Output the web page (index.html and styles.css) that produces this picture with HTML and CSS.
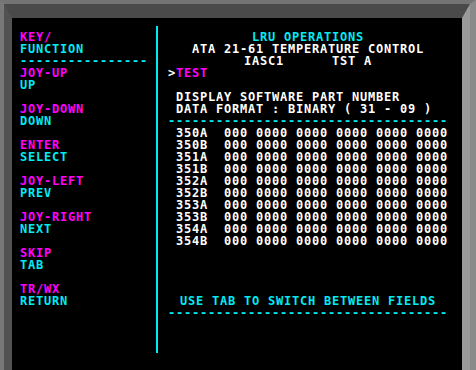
FILE: index.html
```html
<!DOCTYPE html>
<html>
<head>
<meta charset="utf-8">
<link rel="stylesheet" href="styles.css">
</head>
<body>
<div class="bezel">
  <div class="frame">
    <div class="keys">
      <div class="group head">
        <div class="k">KEY/</div>
        <div class="f">FUNCTION</div>
        <div class="f">----------------</div>
      </div>
      <div class="group"><div class="k">JOY-UP</div><div class="f">UP</div></div>
      <div class="group"><div class="k">JOY-DOWN</div><div class="f">DOWN</div></div>
      <div class="group"><div class="k">ENTER</div><div class="f">SELECT</div></div>
      <div class="group"><div class="k">JOY-LEFT</div><div class="f">PREV</div></div>
      <div class="group"><div class="k">JOY-RIGHT</div><div class="f">NEXT</div></div>
      <div class="group"><div class="k">SKIP</div><div class="f">TAB</div></div>
      <div class="group"><div class="k">TR/WX</div><div class="f">RETURN</div></div>
    </div>
    <div class="divider"></div>
    <div class="main">
      <div class="ln c center">LRU OPERATIONS</div>
      <div class="ln w center">ATA 21-61 TEMPERATURE CONTROL</div>
      <div class="ln w center">IASC1      TST A</div>
      <div class="ln w">&gt;<span class="m">TEST</span></div>
      <div class="ln w"> </div>
      <div class="ln w"> DISPLAY SOFTWARE PART NUMBER</div>
      <div class="ln w"> DATA FORMAT : BINARY ( 31 - 09 )</div>
      <div class="ln c">-----------------------------------</div>
      <div class="ln w"> 350A  000 0000 0000 0000 0000 0000</div>
      <div class="ln w"> 350B  000 0000 0000 0000 0000 0000</div>
      <div class="ln w"> 351A  000 0000 0000 0000 0000 0000</div>
      <div class="ln w"> 351B  000 0000 0000 0000 0000 0000</div>
      <div class="ln w"> 352A  000 0000 0000 0000 0000 0000</div>
      <div class="ln w"> 352B  000 0000 0000 0000 0000 0000</div>
      <div class="ln w"> 353A  000 0000 0000 0000 0000 0000</div>
      <div class="ln w"> 353B  000 0000 0000 0000 0000 0000</div>
      <div class="ln w"> 354A  000 0000 0000 0000 0000 0000</div>
      <div class="ln w"> 354B  000 0000 0000 0000 0000 0000</div>
      <div class="ln c center footer">USE TAB TO SWITCH BETWEEN FIELDS</div>
      <div class="ln c">-----------------------------------</div>
    </div>
  </div>
</div>
</body>
</html>
```

FILE: styles.css
```css
html, body {
  margin: 0;
  padding: 0;
  background: #000;
}
.bezel {
  box-sizing: border-box;
  width: 476px;
  height: 370px;
  border-top: 4px solid #747474;
  border-left: 4px solid #787878;
  border-right: 6px solid #8a8a8a;
  background: #777;
}
.frame {
  box-sizing: border-box;
  height: 366px;
  border-top: 14px solid #4a4a4a;
  border-left: 8px solid #525252;
  border-right: 8px solid #9a9a9a;
  background: #000;
  display: flex;
  align-items: flex-start;
  padding-top: 8px;
  font-family: "DejaVu Sans Mono", monospace;
  font-weight: bold;
  font-size: 12px;
  letter-spacing: 0.776px;
  line-height: 12px;
}
.keys {
  box-sizing: border-box;
  width: 144px;
  padding: 5px 0 0 8px;
}
.group {
  margin-bottom: 12px;
}
.group.head {
  margin-bottom: 0;
}
.k, .f, .ln {
  white-space: pre;
  height: 12px;
}
.k { color: #f0f; }
.f { color: #00ebf5; }
.divider {
  width: 2px;
  height: 327px;
  background: #00ebf5;
}
.main {
  box-sizing: border-box;
  width: 290px;
  padding: 5px 0 0 10px;
}
.ln { width: 280px; }
.center { text-align: center; }
.c { color: #00ebf5; }
.w { color: #fff; }
.m { color: #f0f; }
.footer { margin-top: 48px; }
```
